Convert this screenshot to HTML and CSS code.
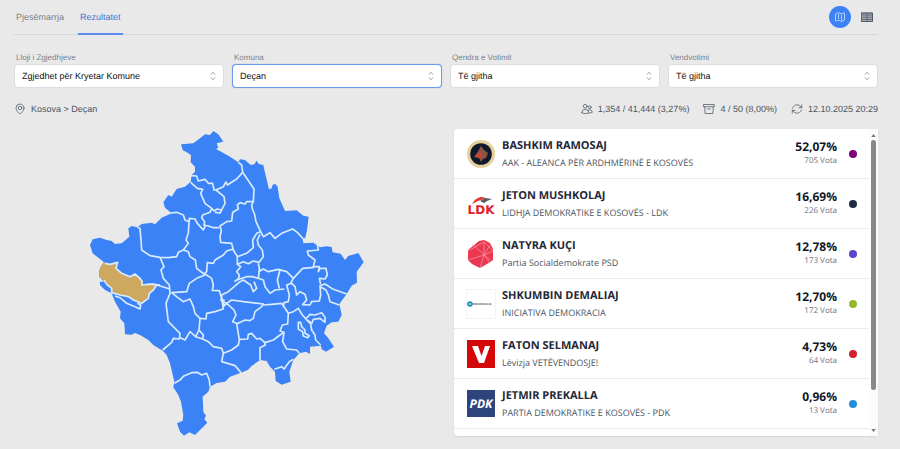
FILE: index.html
```
<!DOCTYPE html>
<html lang="sq">
<head>
<meta charset="utf-8">
<meta name="viewport" content="width=device-width, initial-scale=1">
<title>Rezultatet - Deçan</title>
<link rel="stylesheet" href="styles.css">
</head>
<body>
<div class="page">
    <header class="topbar">
        <nav class="tabs">
            <a class="tab" href="#pjesemarrja">Pjesëmarrja</a>
            <a class="tab active" href="#rezultatet">Rezultatet</a>
        </nav>
        <div class="views">
            <button class="view active" type="button" aria-label="Harta">
                <svg class="icon" viewBox="0 0 24 24"><path d="M9 6.7V15m6-6v8.3m.5 3.4 4.9-2.4c.4-.2.6-.6.6-1V4.8c0-.8-.9-1.4-1.6-1l-3.9 1.9c-.3.2-.7.2-1 0L9.500 3.300a1.100 1.100 0 0 0-1 0L3.600 5.700c-.4.2-.6.6-.6 1v12.500c0 .8.9 1.400 1.600 1l3.900-1.900c.3-.2.7-.2 1 0l5 2.400c.3.200.7.200 1 0z"/></svg>
            </button>
            <button class="view" type="button" aria-label="Tabela">
                <svg class="icon" viewBox="0 0 24 24"><path class="shade" d="M1 4h22v17H1z"/><path d="M1 4h22v17H1zM1 8h22M1 12.500h22M1 17h22M12 8v13"/></svg>
            </button>
        </div>
    </header>

    <form class="filters">
        <div class="field">
            <label for="lloji">Lloji i Zgjedhjeve</label>
            <div class="select">
                <select id="lloji"><option>Zgjedhet për Kryetar Komune</option></select>
                <svg class="chevrons" viewBox="0 0 24 24"><path d="M7 8.500 12 3l5 5.500M7 15.500 12 21l5-5.500"/></svg>
            </div>
        </div>
        <div class="field">
            <label for="komuna">Komuna</label>
            <div class="select">
                <select id="komuna" class="focused"><option>Deçan</option></select>
                <svg class="chevrons" viewBox="0 0 24 24"><path d="M7 8.500 12 3l5 5.500M7 15.500 12 21l5-5.500"/></svg>
            </div>
        </div>
        <div class="field">
            <label for="qendra">Qendra e Votimit</label>
            <div class="select">
                <select id="qendra"><option>Të gjitha</option></select>
                <svg class="chevrons" viewBox="0 0 24 24"><path d="M7 8.500 12 3l5 5.500M7 15.500 12 21l5-5.500"/></svg>
            </div>
        </div>
        <div class="field">
            <label for="vendvotimi">Vendvotimi</label>
            <div class="select">
                <select id="vendvotimi"><option>Të gjitha</option></select>
                <svg class="chevrons" viewBox="0 0 24 24"><path d="M7 8.500 12 3l5 5.500M7 15.500 12 21l5-5.500"/></svg>
            </div>
        </div>
    </form>

    <div class="info">
        <div class="stat place">
            <svg class="icon" viewBox="0 0 24 24"><circle cx="12" cy="10" r="3.500"/><path d="M20 10c0 7-8 12-8 12S4 17 4 10a8 8 0 0 1 16 0z"/></svg>
            <span>Kosova &gt; Deçan</span>
        </div>
        <div class="stats">
            <div class="stat">
                <svg class="icon" viewBox="0 0 24 24"><circle cx="8.500" cy="6.500" r="3.800"/><circle cx="17.500" cy="8.500" r="2.800"/><path d="M1.500 19.500a7 7 0 0 1 14 0c-4 2.300-10 2.300-14 0zM15.500 20c2.500.2 5-.2 7-1.200a5 5 0 0 0-8.500-3.800"/></svg>
                <span>1,354 / 41,444 (3,27%)</span>
            </div>
            <div class="stat">
                <svg class="icon" viewBox="0 0 24 24"><path d="M1.500 3h21v4.500h-21zM3.500 7.500l.6 13.500h15.800l.6-13.500M9.500 12h5"/></svg>
                <span>4 / 50 (8,00%)</span>
            </div>
            <div class="stat">
                <svg class="icon" viewBox="0 0 24 24"><path d="M16 9.300h5.500V3.800M2.500 20.200v-5.500H8M2.800 10.500A9.500 9.500 0 0 1 18.500 6.200l3 3.100M21.200 13.500A9.500 9.500 0 0 1 5.500 17.800l-3-3.100"/></svg>
                <span>12.10.2025 20:29</span>
            </div>
        </div>
    </div>

    <main class="results">
        <svg class="map" viewBox="15 0 870 960" role="img" aria-label="Harta e komunave">
            <path class="land" d="M400 18 415 28 430 50 410 55 415 68 408 72 430 84 450 95 475 112 480 103 495 105 512 120 523 118 530 107 536 117 550 120 553 135 567 193 575 190 578 179 586 177 593 185 598 220 615 258 650 256 670 272 686 275 681 315 676 338 668 342 670 355 700 353 720 367 740 364 755 366 758 382 782 386 795 405 805 393 835 384 851 412 830 440 831 473 815 482 800 507 778 537 785 570 775 590 755 592 740 602 732 625 745 640 762 665 738 680 725 673 723 662 690 665 690 687 678 680 658 685 640 705 628 740 632 770 605 779 587 768 585 740 570 725 560 708 540 705 515 723 503 735 483 743 450 755 435 770 410 774 390 785 385 800 368 815 370 860 378 872 373 882 382 893 345 930 328 922 312 932 300 920 291 895 308 887 310 870 303 830 295 810 280 787 283 770 270 715 260 690 248 677 220 660 205 645 180 630 165 624 155 629 135 628 133 595 120 580 122 560 105 530 95 505 75 495 60 480 60 470 72 470 58 455 57 440 62 425 72 412 60 402 38 385 30 360 38 343 60 338 80 345 95 348 105 357 125 355 148 335 145 310 155 303 172 307 185 297 215 293 225 298 245 278 275 265 255 248 250 232 265 210 275 215 290 192 315 185 332 170 335 150 345 140 345 125 332 112 333 90 320 82 308 75 303 58 340 55 360 40 375 28 390 30z"/>
            <path class="selected" d="M72 412 90 418 113 412 108 430 125 445 150 455 165 447 180 460 187 470 185 480 210 477 230 480 220 495 208 505 205 520 185 535 160 525 145 515 120 510 95 503 95 490 75 470 58 455 57 440 62 425z"/>
            <g class="borders">
                <path d="M75 415 90 418 113 412 108 430 125 445 150 455 165 447 180 460 187 470 185 480 210 477 230 480 220 495 208 505 205 520 185 535 160 525 145 515 120 510 95 503 95 490 80 478 72 465"/>
                <path d="M332 172 352 190 368 193 362 205 375 235 395 250 390 262 368 270 365 278 374 290 372 300 385 303 400 308 418 308"/>
                <path d="M333 152 350 153 355 168 375 163 385 175 398 175 402 195 408 195 432 215 435 235 425 255 412 252 402 258 395 250M405 262 420 264 425 255"/>
                <path d="M408 195 430 185 438 171 442 180 470 162 488 142 485 120 475 112"/>
                <path d="M488 142 522 192 520 230 515 240 518 255 523 265 528 290 542 320 550 335 570 323 585 340 605 325 638 312 652 322 670 342"/>
                <path d="M520 230 500 230 495 237 480 233 472 240 475 252 458 262 455 288 440 290 420 303 424 318 420 335 422 352 455 355 460 375 472 395 500 385 520 368 518 345 530 325 542 320"/>
                <path d="M540 328 532 345 535 360 547 375 550 395 537 412 520 408 505 416 490 410 472 418 472 395M472 418 482 425 470 440 478 450 475 462 463 470"/>
                <path d="M460 372 440 378 430 390 405 405 400 415 382 413 380 440 372 447 350 430 346 405 330 395 325 380 310 375 295 382 290 395 265 398 240 397 210 392 185 375 183 345 180 310 172 307"/>
                <path d="M310 375 325 355 318 345 325 325 327 290 315 285 310 270 290 262 272 264M327 292 328 280 345 282 352 295 370 315 375 305 372 300"/>
                <path d="M240 397 252 425 243 435 250 460 268 480 270 505 258 535 265 590 300 625 298 642 280 640 275 652 248 675"/>
                <path d="M230 480 270 492M200 480 218 477 240 480M105 513 120 518 140 535 165 545 180 552 182 540 172 535"/>
                <path d="M298 637 315 645 330 620 347 635 357 615 360 580 345 565 340 545 330 522 310 530 290 515 275 503 320 500 328 475 350 460 375 450"/>
                <path d="M375 447 395 460 400 480 397 496 418 497 425 520 430 552 405 560 380 565 378 582 360 580M357 615 370 630 368 642 347 635M368 642 385 650 400 665 425 670 430 685 425 710 465 722 483 743"/>
                <path d="M283 775 300 765 310 754 335 743 352 742 365 750 380 745 388 765 390 785"/>
                <path d="M430 685 455 675 475 660 478 645 470 595 458 590 468 570 462 555 440 535 455 525 490 530 550 537 545 545 525 560 520 580 510 587 495 585 470 597"/>
                <path d="M550 540 575 538 605 535 615 550 625 565 623 597 607 600 600 618 612 622 600 630 580 645 555 653 540 640 530 642 515 625 505 628 503 642 478 643"/>
                <path d="M553 650 556 660 540 668 540 705M612 622 608 650 620 672 650 675 658 685M583 733 605 725 612 732 628 710 640 703"/>
                <path d="M625 565 640 560 655 550 665 567 680 585 692 597 695 615 705 630 707 645 722 660"/>
                <path d="M677 582 690 568 705 570 725 563 735 577 735 592 720 580 700 583 695 595 682 585"/>
                <path d="M655 592 662 592 665 605 675 615 675 625 688 632 683 638 670 633 668 620 655 612z"/>
                <path d="M800 507 760 493 735 477 720 482 722 510 718 528 695 530 690 540 668 539 680 525 675 508 660 500 650 510 645 485 635 475 620 480 628 510 625 530 612 533 610 545M720 485 738 495 745 510 750 530 778 540"/>
                <path d="M712 358 715 375 682 378 685 390 705 405 700 425 718 425 715 440 720 430 738 430 742 450 735 462 718 460 722 478"/>
                <path d="M703 427 668 430 640 460 632 475M640 460 620 440 595 433 565 440 550 432 540 438 535 415M600 435 592 465 598 490M538 430 535 460 550 465 555 485 570 505 585 495 613 492"/>
                <path d="M420 512 445 500 480 470 490 465 512 480 520 500 530 490 522 470M470 465 500 455 518 455 535 460M420 525 432 525 430 545 440 535 425 525 425 510"/>
            </g>
        </svg>

        <section class="panel">
            <ul class="list">
                <li class="row">
                    <svg class="logo" viewBox="0 0 28 28"><circle cx="14" cy="14" r="14" fill="#e5cf9c"/><circle cx="14" cy="14" r="10.800" fill="#10182c"/><path d="M14 6l3 4 4 3-2 5-3 1-2 3-2-4-5-1 3-4z" fill="#8a5545"/><path d="M7 17l6-5 2 2-1 4-5-1z" fill="#c84537"/></svg>
                    <div class="who"><h2>BASHKIM RAMOSAJ</h2><p>AAK - ALEANCA PËR ARDHMËRINË E KOSOVËS</p></div>
                    <div class="votes"><strong>52,07%</strong><span>705 Vota</span></div>
                    <i class="dot purple"></i>
                </li>
                <li class="row">
                    <svg class="logo" viewBox="0 0 28 28"><path d="M5 14c3-5 6-7 10-7l4 1-5 2-3 1z" fill="#e23a36"/><path d="M13 11l5-3 7 1-5 2-3 2z" fill="#555c60"/><text class="ldk" x="14" y="24" text-anchor="middle">LDK</text></svg>
                    <div class="who"><h2>JETON MUSHKOLAJ</h2><p>LIDHJA DEMOKRATIKE E KOSOVËS - LDK</p></div>
                    <div class="votes"><strong>16,69%</strong><span>226 Vota</span></div>
                    <i class="dot navy"></i>
                </li>
                <li class="row">
                    <svg class="logo" viewBox="0 0 28 28"><path d="M12 1l5-1 6 3 3 6v11l-6 4-7 4-8-4-4-4V10z" fill="#ea3850"/><path d="M1 11 17 2l9 9M5 4l18 16M1 20l16-5 9-4M17 2l0 13-4 13M23 5l-6 10 6 8" fill="none" stroke="#f79aa5" stroke-width=".7"/></svg>
                    <div class="who"><h2>NATYRA KUÇI</h2><p>Partia Socialdemokrate PSD</p></div>
                    <div class="votes"><strong>12,78%</strong><span>173 Vota</span></div>
                    <i class="dot violet"></i>
                </li>
                <li class="row">
                    <svg class="logo framed" viewBox="0 0 28 28"><circle cx="3" cy="14" r="2.800" fill="#268bb5"/><text class="demo light" x="2" y="15">D</text><text class="demo" x="6" y="15">EMOKRACIA</text></svg>
                    <div class="who"><h2>SHKUMBIN DEMALIAJ</h2><p>INICIATIVA DEMOKRACIA</p></div>
                    <div class="votes"><strong>12,70%</strong><span>172 Vota</span></div>
                    <i class="dot green"></i>
                </li>
                <li class="row">
                    <svg class="logo" viewBox="0 0 28 28"><path d="M0 0h28v28H0z" fill="#d40808"/><path d="M5 6h6l3.500 10L18 6h5l-6 17h-5z" fill="#fff"/></svg>
                    <div class="who"><h2>FATON SELMANAJ</h2><p>Lëvizja VETËVENDOSJE!</p></div>
                    <div class="votes"><strong>4,73%</strong><span>64 Vota</span></div>
                    <i class="dot red"></i>
                </li>
                <li class="row">
                    <svg class="logo" viewBox="0 0 28 28"><path d="M0 0h28v27H0z" fill="#2d457c"/><text class="pdk" x="14" y="18" text-anchor="middle">PDK</text></svg>
                    <div class="who"><h2>JETMIR PREKALLA</h2><p>PARTIA DEMOKRATIKE E KOSOVËS - PDK</p></div>
                    <div class="votes"><strong>0,96%</strong><span>13 Vota</span></div>
                    <i class="dot blue"></i>
                </li>
            </ul>
            <div class="scrollbar">
                <svg class="arrow" viewBox="0 0 6 4"><path d="M0 4 3 0l3 4z"/></svg>
                <div class="thumb"></div>
                <svg class="arrow" viewBox="0 0 6 4"><path d="M0 0h6L3 4z"/></svg>
            </div>
        </section>
    </main>
</div>
</body>
</html>
```
FILE: styles.css
```
* {
    box-sizing: border-box;
}
body {
    margin: 0;
    background: #e9e9e9;
    color: #4b5563;
    font-family: "Liberation Sans", Arial, sans-serif;
    font-size: 9px;
    text-rendering: geometricPrecision;
}
.page {
    padding: 0 22px 12px 14px;
}
.icon {
    width: 12px;
    height: 12px;
    fill: none;
    stroke: currentColor;
    stroke-width: 1.5;
    stroke-linejoin: round;
    stroke-linecap: round;
}

/* tabs */
.topbar {
    display: flex;
    justify-content: space-between;
    height: 35px;
    border-bottom: 1px solid #d4d6d9;
}
.tabs {
    display: flex;
    gap: 12px;
}
.tab {
    height: 35px;
    padding: 0 2px;
    border-bottom: 2px solid transparent;
    color: #7b818c;
    line-height: 35px;
    text-decoration: none;
}
.tab.active {
    color: #4673d3;
    border-color: #5b8def;
}
.views {
    display: flex;
    align-items: center;
    gap: 5px;
}
.view {
    display: flex;
    align-items: center;
    justify-content: center;
    width: 22px;
    height: 22px;
    padding: 0;
    border: 0;
    border-radius: 50%;
    background: none;
    color: #4b5563;
}
.view.active {
    background: #3b82f6;
    color: #e4eeff;
}
.shade {
    fill: #a9adb5;
}

/* filters */
.filters {
    display: grid;
    grid-template-columns: repeat(4, 1fr);
    gap: 8px;
    margin-top: 18px;
}
.field label {
    display: block;
    padding-left: 2px;
    color: #7b818c;
    font-size: 8px;
    line-height: 10px;
}
.select {
    position: relative;
    margin-top: 1px;
}
.select select {
    display: block;
    appearance: none;
    width: 100%;
    height: 24px;
    padding: 0 20px 0 7px;
    border: 1px solid #dcdee2;
    border-radius: 4px;
    background: #fff;
    color: #111;
    font: inherit;
    text-rendering: inherit;
}
.select .focused {
    border-color: #6d98ec;
    box-shadow: 0 0 1px #6d98ec;
}
.chevrons {
    position: absolute;
    top: 7px;
    right: 6px;
    width: 10px;
    height: 10px;
    fill: none;
    stroke: #8b919b;
    stroke-width: 2;
}

/* place and turnout */
.info {
    display: flex;
    justify-content: space-between;
    margin-top: 14px;
}
.stats {
    display: flex;
    gap: 14px;
}
.stat {
    display: flex;
    align-items: center;
    gap: 5px;
    height: 13px;
}

/* map and list */
.results {
    display: grid;
    grid-template-columns: 432fr 424fr;
    gap: 8px;
    align-items: start;
    margin-top: 14px;
}
.map {
    width: 290px;
    height: 320px;
    margin: -4px auto 0;
}
.land {
    fill: #3b82f6;
}
.selected {
    fill: #cfa860;
}
.borders {
    fill: none;
    stroke: #d9ebff;
    stroke-width: 5;
    stroke-linejoin: round;
}
.panel {
    display: flex;
    border-radius: 4px;
    background: #fff;
    font-family: "Open Sans", "Noto Sans", sans-serif;
    box-shadow: 0 1px 2px #d5d5d5;
}
.list {
    flex: 1;
    margin: 0;
    padding: 0 0 7px;
    list-style: none;
}
.row {
    display: flex;
    align-items: center;
    height: 50px;
    padding: 0 12px 0 13px;
    border-bottom: 1px solid #e8eaed;
}
.logo {
    width: 28px;
    height: 28px;
}
.framed {
    outline: 1px solid #f3f3f3;
}
.ldk {
    fill: #df2029;
    font: bold 12px "DejaVu Sans", sans-serif;
}
.demo {
    fill: #555;
    font: bold 3px "Liberation Sans", sans-serif;
}
.demo.light {
    fill: #fff;
}
.pdk {
    fill: #fff;
    font: italic bold 12px "Open Sans", sans-serif;
}
.who {
    flex: 1;
    margin-left: 7px;
}
.who h2 {
    margin: 0;
    color: #1f2937;
    font-size: 11px;
    font-weight: 700;
    line-height: 17px;
}
.who p {
    margin: 0;
    font-size: 9px;
    line-height: 17px;
}
.votes {
    display: flex;
    flex-direction: column;
    text-align: right;
}
.votes strong {
    color: #111827;
    font-size: 12px;
    font-weight: 700;
    line-height: 14px;
}
.votes span {
    color: #6b7280;
    font-size: 8px;
    line-height: 14px;
}
.dot {
    width: 8px;
    height: 8px;
    margin-left: 12px;
    border-radius: 50%;
}
.purple { background: #800080; }
.navy { background: #1f2a44; }
.violet { background: #5b45cf; }
.green { background: #94b72c; }
.red { background: #d1202f; }
.blue { background: #258fd5; }

.scrollbar {
    display: flex;
    flex-direction: column;
    align-items: center;
    width: 9px;
    padding: 5px 0 4px;
    background: #fcfcfc;
}
.arrow {
    width: 5px;
    height: 3px;
    fill: #777;
}
.thumb {
    width: 5px;
    height: 250px;
    margin: 3px 0 auto;
    border-radius: 3px;
    background: #888;
}
```
